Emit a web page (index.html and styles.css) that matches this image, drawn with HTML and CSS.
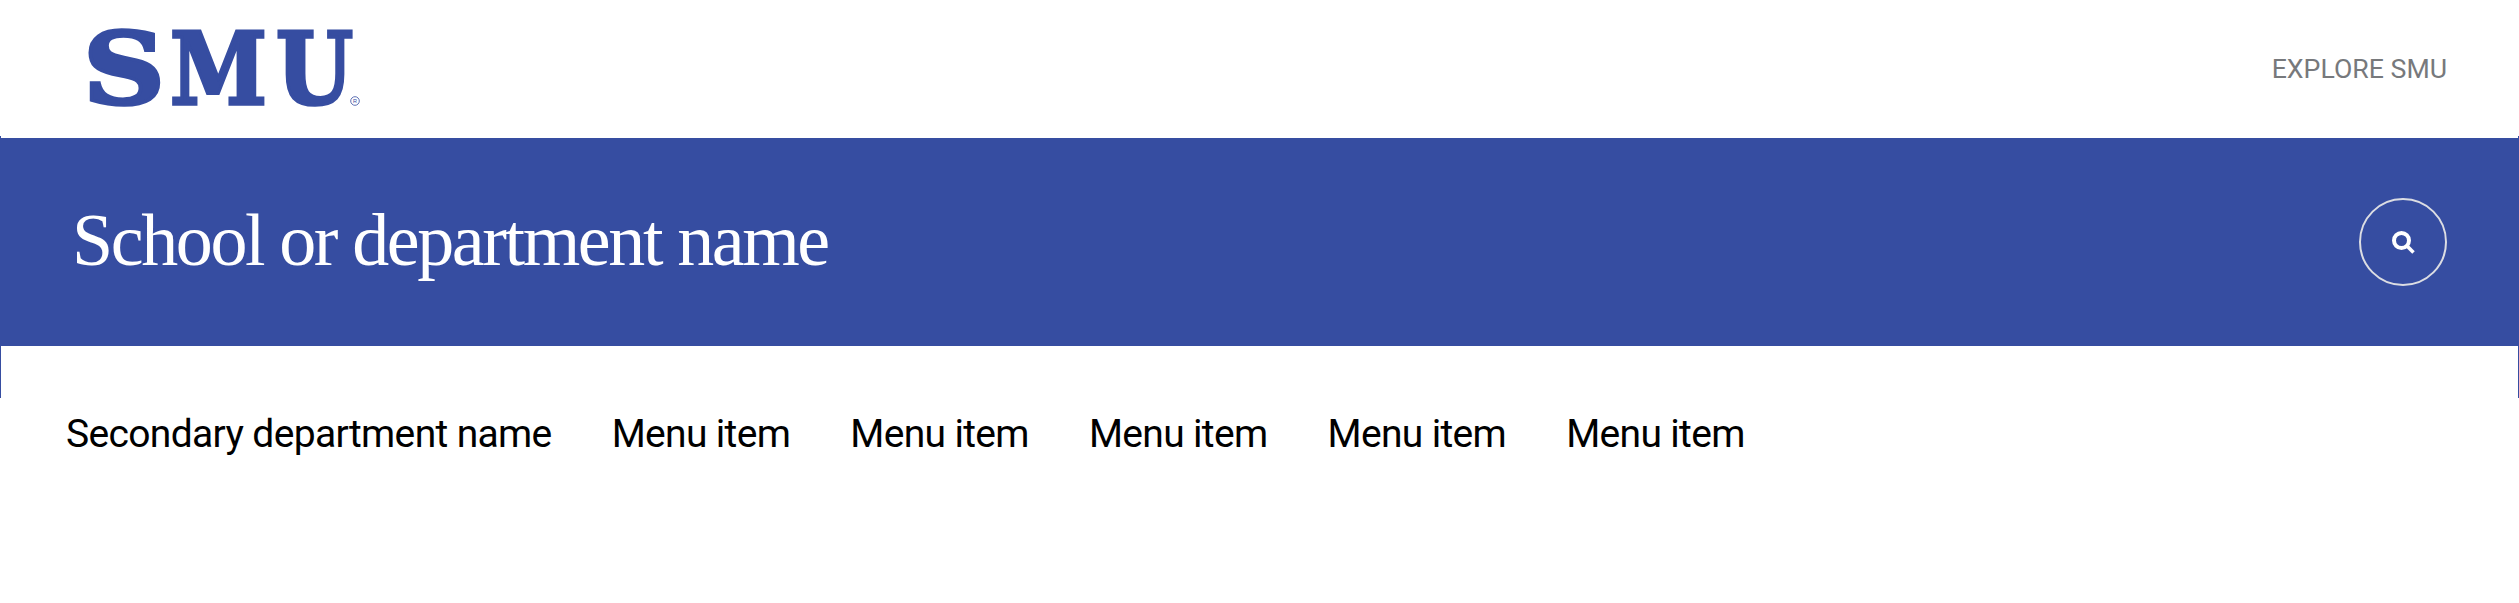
FILE: index.html
```html
<!DOCTYPE html>
<html lang="en">
<head>
<meta charset="utf-8">
<title>SMU</title>
<link rel="stylesheet" href="styles.css">
</head>
<body>
<header class="top">
  <svg class="logo" width="276" height="90" viewBox="0 0 276 90" role="img" aria-label="SMU">
    <text class="logo-word" x="-3" y="78" textLength="82" lengthAdjust="spacingAndGlyphs">S</text>
    <text class="logo-word" x="84" y="78" textLength="97" lengthAdjust="spacingAndGlyphs">M</text>
    <text class="logo-word" x="190" y="78" textLength="77" lengthAdjust="spacingAndGlyphs">U</text>
    <circle class="logo-r-ring" cx="269" cy="75" r="4.3"/>
    <text class="logo-r" x="269" y="77" text-anchor="middle">R</text>
  </svg>
  <a class="explore" href="#">EXPLORE SMU</a>
</header>
<div class="frame">
  <section class="band">
    <h1 class="title">School or department name</h1>
    <button class="search" aria-label="Search">
      <svg width="23" height="23" viewBox="0 0 23 23">
        <circle cx="9.5" cy="9.5" r="7.5" class="search-lens"/>
        <path d="M14.8 14.8 L21.5 21.5" class="search-handle"/>
      </svg>
    </button>
  </section>
  <div class="frame-gap"></div>
</div>
<nav class="nav">
  <a class="nav-link" href="#">Secondary department name</a>
  <a class="nav-link" href="#">Menu item</a>
  <a class="nav-link" href="#">Menu item</a>
  <a class="nav-link" href="#">Menu item</a>
  <a class="nav-link" href="#">Menu item</a>
  <a class="nav-link" href="#">Menu item</a>
</nav>
</body>
</html>
```
FILE: styles.css
```css
* { box-sizing: border-box; }
html, body { margin: 0; padding: 0; background: #fff; }
body { height: 603px; overflow: hidden; font-family: "Liberation Sans", Arial, sans-serif; }

.top {
  height: 136px;
  display: flex;
  align-items: flex-start;
  justify-content: space-between;
  padding: 26px 72px 0 86px;
}
.logo { display: block; overflow: visible; }
.logo-word {
  font-family: "DejaVu Serif", serif;
  font-weight: 700;
  font-size: 100px;
  fill: #364da1;
  stroke: #364da1;
  stroke-width: 3.5px;
  stroke-linejoin: miter;
}
.logo-r-ring { fill: none; stroke: #364da1; stroke-width: 0.8; }
.logo-r { font-family: "Liberation Sans", sans-serif; font-size: 5.5px; fill: #364da1; }
.explore {
  margin-top: 27px;
  font-family: Roboto, sans-serif;
  font-size: 26.7px;
  line-height: 32px;
  color: #77797c;
  text-decoration: none;
}

.frame {
  height: 262px;
  padding-top: 2px;
  border-left: 1px solid #364da1;
  border-right: 1px solid #364da1;
}
.band {
  height: 208px;
  margin: 0 -1px;
  background: #364da1;
  display: flex;
  align-items: center;
  justify-content: space-between;
  padding: 0 72px;
}
.title {
  margin: 0 0 5px;
  font-family: "Liberation Serif", "Times New Roman", serif;
  font-weight: 400;
  font-size: 74px;
  line-height: 80px;
  letter-spacing: -2.4px;
  color: #fff;
}
.search {
  width: 88px;
  height: 88px;
  padding: 0;
  border: 2px solid #dcdde3;
  border-radius: 50%;
  background: transparent;
  display: flex;
  align-items: center;
  justify-content: center;
}
.search-lens { fill: none; stroke: #fff; stroke-width: 4; }
.search-handle { fill: none; stroke: #fff; stroke-width: 3.6; }

.nav {
  display: flex;
  gap: 60px;
  padding: 14px 0 0 66px;
}
.nav-link {
  font-family: Roboto, sans-serif;
  font-size: 39px;
  line-height: 44px;
  letter-spacing: -0.66px;
  color: #000;
  text-decoration: none;
}
```
